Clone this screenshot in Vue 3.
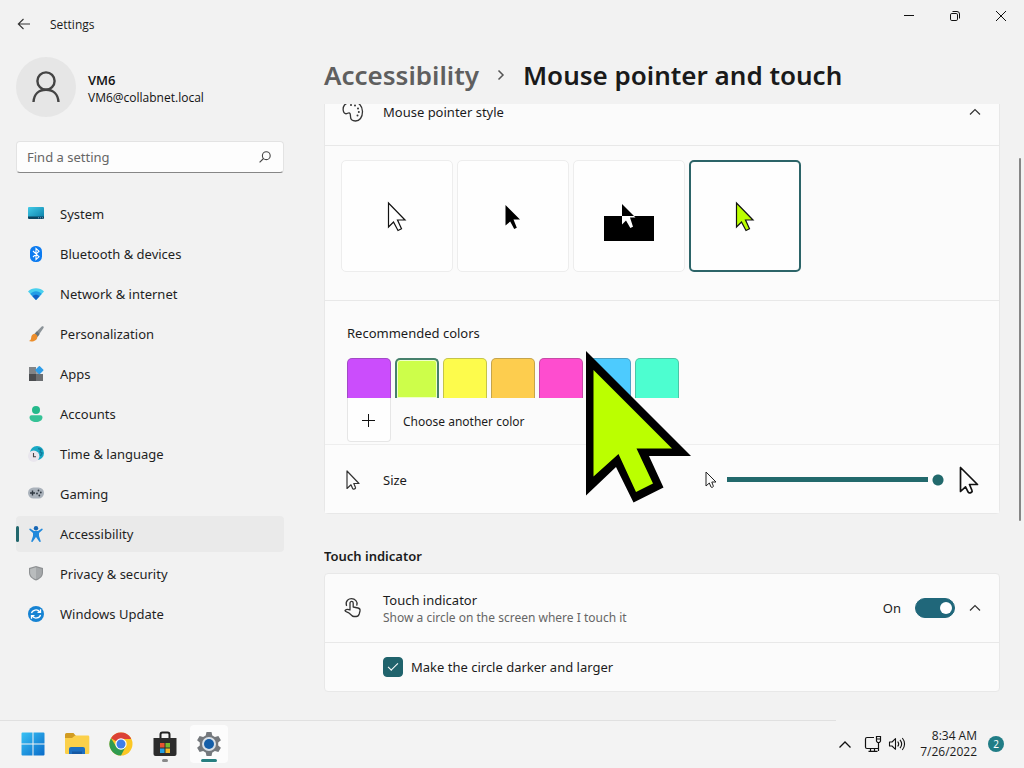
<script setup>
import { ref } from 'vue'

const navItems = [
  { id: 'system', label: 'System' },
  { id: 'bluetooth', label: 'Bluetooth & devices' },
  { id: 'network', label: 'Network & internet' },
  { id: 'personalization', label: 'Personalization' },
  { id: 'apps', label: 'Apps' },
  { id: 'accounts', label: 'Accounts' },
  { id: 'time', label: 'Time & language' },
  { id: 'gaming', label: 'Gaming' },
  { id: 'accessibility', label: 'Accessibility' },
  { id: 'privacy', label: 'Privacy & security' },
  { id: 'update', label: 'Windows Update' },
]
const active = ref('accessibility')

const pointerStyles = ['White', 'Black', 'Inverted', 'Custom']
const pointerStyle = ref('Custom')

const colors = [
  { name: 'Purple', value: '#cb4dfc' },
  { name: 'Lime', value: '#cdfe4a' },
  { name: 'Yellow', value: '#fdfb4c' },
  { name: 'Gold', value: '#fdcd4e' },
  { name: 'Pink', value: '#fe4dcf' },
  { name: 'Turquoise', value: '#4dcbfe' },
  { name: 'Green', value: '#4dfed0' },
]
const color = ref('Lime')
const size = ref(15)
const touch = ref(true)
const darker = ref(true)
const search = ref('')
</script>

<template>
  <div class="desktop">
    <div class="window">
      <header class="titlebar">
        <button class="back" aria-label="Back">
          <svg width="14" height="12" viewBox="0 0 14 12"><path d="M13 6H1.5M6.5 1L1.3 6l5.2 5" fill="none" stroke="#333" stroke-width="1.1" /></svg>
        </button>
        <span class="app-title">Settings</span>
        <div class="controls">
          <button aria-label="Minimize"><svg width="12" height="12" viewBox="0 0 12 12"><path d="M1 5.5h10" stroke="#111" /></svg></button>
          <button aria-label="Restore"><svg width="12" height="12" viewBox="0 0 12 12"><g fill="none" stroke="#111"><rect x="1.5" y="3.5" width="7" height="7" rx="1.3" /><path d="M3.5 1.5H8A2.5 2.5 0 0 1 10.500 4v4.500" /></g></svg></button>
          <button aria-label="Close"><svg width="12" height="12" viewBox="0 0 12 12"><path d="M1 1l10 10M11 1L1 11" stroke="#111" /></svg></button>
        </div>
      </header>

      <div class="body">
        <aside class="sidebar">
          <div class="profile">
            <div class="avatar">
              <svg width="28" height="32" viewBox="0 0 28 32"><g fill="none" stroke="#444" stroke-width="2.4"><circle cx="14" cy="10" r="8.600" /><path d="M1.500 31C2 23 7 18.800 14 18.800S26 23 26.500 31" /></g></svg>
            </div>
            <div class="who">
              <div class="user">VM6</div>
              <div class="mail">VM6@collabnet.local</div>
            </div>
          </div>
          <div class="search">
            <input v-model="search" type="text" aria-label="Find a setting" placeholder="Find a setting" />
            <svg width="12" height="12" viewBox="0 0 12 12"><g fill="none" stroke="#444" stroke-width="1.1"><circle cx="7.300" cy="4.700" r="3.900" /><path d="M4.500 7.500L.6 11.400" /></g></svg>
          </div>
          <nav>
            <a v-for="item in navItems" :key="item.id" href="#" :class="{ on: active === item.id }" @click.prevent="active = item.id">
              <svg v-if="item.id === 'system'" class="ic" viewBox="0 0 16 16">
                <defs><linearGradient id="sy" x2="1" y2="1"><stop stop-color="#42cbe8" /><stop offset="1" stop-color="#0a7fa8" /></linearGradient></defs>
                <path d="M0 2a1 1 0 0 1 1-1h14a1 1 0 0 1 1 1v10H0z" fill="url(#sy)" /><path d="M0 10.500h16V12a1 1 0 0 1-1 1H1a1 1 0 0 1-1-1z" fill="#0b4560" /><path d="M10 11.800h1M12 11.800h1M14 11.800h1" stroke="#9be" stroke-width=".8" />
              </svg>
              <svg v-else-if="item.id === 'bluetooth'" class="ic" viewBox="0 0 16 16">
                <rect x="2" width="12" height="16" rx="5.500" fill="#0c7bf0" /><path d="M5 5l6 5.800L8 13.500v-11L11 5.200 5 11" fill="none" stroke="#fff" stroke-width="1.100" />
              </svg>
              <svg v-else-if="item.id === 'network'" class="ic" viewBox="0 0 16 16">
                <path d="M0 5.500C4 1.200 12 1.200 16 5.500L8 14z" fill="#49d0ee" /><path d="M2.300 7.900C5.500 4.500 10.500 4.500 13.700 7.900L8 14z" fill="#219ce6" /><path d="M4.500 10.200c2-2 5-2 7 0L8 14z" fill="#1260c5" />
              </svg>
              <svg v-else-if="item.id === 'personalization'" class="ic" viewBox="0 0 16 16">
                <path d="M14 .3c1.200-.6 2.200.5 1.500 1.600L10 10 7 7.300z" fill="#8b9398" /><path d="M9 5.300L11.700 8 9.500 11 6.500 8z" fill="#68747a" /><path d="M6.300 7.800c1.800.1 3 1.300 3.100 3.100C9 14.500 5 16.200.8 15c1.900-.6 2.200-1.500 2.400-3.500.2-2 1.300-3.500 3.100-3.700z" fill="#ec8e2c" />
              </svg>
              <svg v-else-if="item.id === 'apps'" class="ic" viewBox="0 0 16 16">
                <path d="M1 1h7v7H1z" fill="#818487" /><path d="M1 8h7v7H1z" fill="#4b4d50" /><path d="M8 8h7v7H8z" fill="#6c6f72" /><path d="M8 3h4v5H8z" fill="#a0a3a6" /><rect x="8.300" y="1" width="6.200" height="6.200" rx=".8" transform="rotate(45 11.400 4.100)" fill="#2e9de9" />
              </svg>
              <svg v-else-if="item.id === 'accounts'" class="ic" viewBox="0 0 16 16">
                <circle cx="8" cy="4" r="4" fill="#24b98b" /><path d="M3.500 9.300h9a2 2 0 0 1 2 2C14.500 14.500 11.500 16 8 16s-6.500-1.500-6.500-4.700a2 2 0 0 1 2-2z" fill="#35c296" />
              </svg>
              <svg v-else-if="item.id === 'time'" class="ic" viewBox="0 0 16 16">
                <circle cx="9" cy="7" r="7" fill="#19a9c5" /><path d="M10 2.500l3 1-1 2.500 2 1-1.500 3" fill="none" stroke="#127d9e" stroke-width="1.500" /><circle cx="5.700" cy="10.300" r="5.700" fill="#e9e6ed" /><path d="M5.500 7v3.800H8" fill="none" stroke="#444" stroke-width="1.100" />
              </svg>
              <svg v-else-if="item.id === 'gaming'" class="ic" viewBox="0 0 16 16">
                <rect y="1.500" width="16" height="11" rx="5.500" fill="#aab2bb" /><path d="M2 7h5M4.500 4.500v5" stroke="#303942" stroke-width="1.400" /><g fill="#303942"><circle cx="10.500" cy="4.500" r=".9" /><circle cx="12.800" cy="6.500" r=".9" /><circle cx="9" cy="7.500" r=".9" /><circle cx="11.300" cy="9.500" r=".9" /></g>
              </svg>
              <svg v-else-if="item.id === 'accessibility'" class="ic" viewBox="0 0 16 16">
                <circle cx="8" cy="2.200" r="2.200" fill="#1766b4" /><path d="M2.500 2.700L6 5h4l3.500-2.300c.8-.4 1.700.6.900 1.300L11 6.900v3l1.700 5.200c.2 1-1.100 1.300-1.500.5L8 11l-3.200 4.600c-.4.800-1.700.5-1.500-.5L5 9.900v-3L1.600 4c-.8-.7.1-1.700.9-1.300z" fill="#2089dc" />
              </svg>
              <svg v-else-if="item.id === 'privacy'" class="ic" viewBox="0 0 16 16">
                <path d="M8 0l7 2v4.500c0 4-3 6.500-7 8-4-1.500-7-4-7-8V2z" fill="#8e9193" /><path d="M8 1.200l5.900 1.700v3.600c0 3.400-2.500 5.500-5.900 6.800z" fill="#a5a8aa" /><path d="M8 1.200v12.100c-3.400-1.300-5.900-3.400-5.900-6.800V2.900z" fill="#b9bcbd" />
              </svg>
              <svg v-else class="ic" viewBox="0 0 16 16">
                <circle cx="8" cy="8" r="8" fill="#1683d3" /><g fill="none" stroke="#fff" stroke-width="1.300"><path d="M3.500 7.200C4.300 3.700 9.500 2.700 11.700 5.800M12.500 3.300v3h-3M12.500 8.800c-.8 3.500-6 4.500-8.200 1.400M3.500 12.700v-3h3" /></g>
              </svg>
              <span>{{ item.label }}</span>
            </a>
          </nav>
        </aside>

        <main>
          <h1>
            <a href="#">Accessibility</a>
            <svg width="8" height="12" viewBox="0 0 8 12"><path d="M1.500 1.500L6 6l-4.500 4.500" fill="none" stroke="#555" stroke-width="1.500" /></svg>
            <span>Mouse pointer and touch</span>
          </h1>

          <div class="viewport">
            <section class="card first">
              <div class="row head">
                <svg class="row-ic" width="22" height="22" viewBox="0 0 22 22"><path d="M2.500 4C4.500 2 7.500 1 11 1c6 0 9.500 4 9.500 9.500 0 6-3 9.500-7 9.500-3.500 0-5-2-5-4.500 0-2.200-.2-3.700-1.500-3.700-1.200 0-2 1.200-3.500.9C1 12.200.2 7 2.500 4z" fill="none" stroke="#333" stroke-width="1.300" /><g fill="#333"><circle cx="9" cy="4" r="1" /><circle cx="13" cy="4.500" r="1" /><circle cx="16" cy="7.500" r="1" /><circle cx="16.800" cy="11" r="1" /><circle cx="15.500" cy="14.500" r="1" /></g></svg>
                <span class="grow">Mouse pointer style</span>
                <button class="chev" aria-label="Collapse mouse pointer style"><svg width="12" height="8" viewBox="0 0 12 8"><path d="M1 6.500l5-5 5 5" fill="none" stroke="#333" stroke-width="1.200" /></svg></button>
              </div>

              <div class="tiles">
                <button v-for="name in pointerStyles" :key="name" class="tile" :class="{ on: pointerStyle === name }" :aria-label="name" @click="pointerStyle = name">
                  <svg v-if="name === 'White'" width="50" height="50" viewBox="0 0 50 50"><path d="M16.500 12v24l5-5 4.500 8.500 3.500-1.700-4-8.800H33z" fill="#fff" stroke="#111" stroke-width="1.200" /></svg>
                  <svg v-else-if="name === 'Black'" width="50" height="50" viewBox="0 0 50 50"><path d="M17.500 14v20.500l4.700-4 4 7.500 2.600-1.300L25.500 28.500H32z" fill="#000" /></svg>
                  <svg v-else-if="name === 'Inverted'" width="50" height="50" viewBox="0 0 50 50"><path d="M0 25h50v25H0z" fill="#000" /><path d="M18 13v12h12z" fill="#000" /><path d="M18 25h12l1.500 1.500H26l3 9.300-2.700 1.200-4.300-7.500-4 4z" fill="#fff" /></svg>
                  <svg v-else width="50" height="50" viewBox="0 0 50 50"><path d="M16.500 12v24l5-5 4.500 8.500 3.500-1.700-4-8.800H33z" fill="#bf0" stroke="#111" stroke-width="1.200" /></svg>
                </button>
              </div>

              <div class="colors">
                <h2>Recommended colors</h2>
                <div class="swatches">
                  <button v-for="c in colors" :key="c.name" class="swatch" :class="{ on: color === c.name }" :aria-label="c.name" :style="{ backgroundColor: c.value }" @click="color = c.name"></button>
                </div>
                <div class="another">
                  <button id="add" aria-label="Choose another color"><svg width="14" height="14" viewBox="0 0 14 14"><path d="M0 7.500h13M6.500 1v13" stroke="#111" /></svg></button>
                  <label for="add">Choose another color</label>
                </div>
              </div>

              <div class="row size">
                <svg class="row-ic" width="22" height="22" viewBox="0 0 22 22"><path d="M5 2v17.500l4-3.700 1.700 3.900c.5 1 3.300-.1 2.800-1.200L11.800 14.500H17z" fill="none" stroke="#333" stroke-width="1.200" stroke-linejoin="round" /></svg>
                <label class="grow" for="size">Size</label>
                <svg class="small" width="12" height="18" viewBox="0 0 12 18"><path d="M1 1v14l3.300-3 1.700 4c.7 1 2.700 0 2.300-1L6.800 11H11z" fill="none" stroke="#222" stroke-linejoin="round" /></svg>
                <input id="size" v-model="size" type="range" min="1" max="15" />
                <svg class="large" width="20" height="28" viewBox="0 0 20 28"><path d="M1.500 1.500v24l5-4.700 2.800 5.500c1 1.500 4.500 0 3.700-1.800L10.500 18.500h8z" fill="none" stroke="#111" stroke-width="1.700" stroke-linejoin="round" /></svg>
              </div>
            </section>

            <h3>Touch indicator</h3>
            <section class="card">
              <div class="row">
                <svg class="row-ic" width="22" height="22" viewBox="0 0 22 22"><g fill="none" stroke="#333" stroke-width="1.300" stroke-linejoin="round" stroke-linecap="round"><path d="M4.500 8.500C3 3.500 7 1.700 9.500 1.700c3.500 0 6.500 2.800 5.300 6.500" /><path d="M8 12.500V6a1.600 1.600 0 0 1 3.200 0v4l4.800 1c1.500.4 2.300 1.500 2 3l-.8 3c-.5 1.700-1.500 2.500-3 2.500H12c-1 0-1.500-.2-2.200-1L7 16c-1.500-1-4-1-4-2.500 1.300-1.300 3.500-1.300 5-.5" /></g></svg>
                <div class="grow">
                  <label for="touch">Touch indicator</label>
                  <p>Show a circle on the screen where I touch it</p>
                </div>
                <span class="state">{{ touch ? 'On' : 'Off' }}</span>
                <input id="touch" v-model="touch" class="toggle" type="checkbox" role="switch" />
                <button class="chev" aria-label="Collapse touch indicator"><svg width="12" height="8" viewBox="0 0 12 8"><path d="M1 6.500l5-5 5 5" fill="none" stroke="#333" stroke-width="1.200" /></svg></button>
              </div>
              <div class="sub">
                <input id="darker" v-model="darker" class="check" type="checkbox" />
                <label for="darker">Make the circle darker and larger</label>
              </div>
            </section>
          </div>
        </main>
      </div>
      <div class="scrollbar"></div>
    </div>

    <footer class="taskbar">
      <div class="pinned">
        <button aria-label="Start"><svg width="24" height="24" viewBox="0 0 24 24"><defs><linearGradient id="st" gradientUnits="userSpaceOnUse" x1="0" y1="0" x2="24" y2="24"><stop stop-color="#3ac4f6" /><stop offset="1" stop-color="#0869c8" /></linearGradient></defs><path d="M.5 1.500a1 1 0 0 1 1-1h10v11H.5zM12.500.5h10a1 1 0 0 1 1 1v10h-11zM.5 12.500h11v11h-10a1 1 0 0 1-1-1zM12.500 12.500h11v10a1 1 0 0 1-1 1h-10z" fill="url(#st)" /></svg></button>
        <button aria-label="File Explorer"><svg width="26" height="24" viewBox="0 0 26 24"><path d="M1 2.500A1.500 1.500 0 0 1 2.500 1h7L12 4 9 7H1z" fill="#d19b22" /><path d="M1 6h7l3-2.500h13a1.300 1.300 0 0 1 1.300 1.300v15.900A1.300 1.300 0 0 1 24 22H2.300A1.300 1.300 0 0 1 1 20.700z" fill="#fbd04a" /><path d="M5 22v-5a2 2 0 0 1 2-2h12a2 2 0 0 1 2 2v5z" fill="#1c6fc1" /><path d="M8 22v-2.500h10V22z" fill="#1558a2" /></svg></button>
        <button aria-label="Chrome"><svg width="24" height="24" viewBox="0 0 24 24"><circle cx="12" cy="12" r="11.500" fill="#fbc724" /><path d="M12 12L2 6.200A11.500 11.500 0 0 1 22 6.200L21.800 7H12z" fill="#db4136" /><path d="M2 6.200A11.500 11.500 0 0 0 12 23.500l4.500-8.500L12 12 7.500 15z" fill="#2f9b50" /><circle cx="12" cy="12" r="5.700" fill="#fff" /><circle cx="12" cy="12" r="4.500" fill="#3e7eea" /></svg></button>
        <button class="running" aria-label="Microsoft Store"><svg width="24" height="26" viewBox="0 0 24 26"><path d="M7.500 8V3.500a2 2 0 0 1 2-2h5a2 2 0 0 1 2 2V8" fill="none" stroke="#222" stroke-width="2" /><path d="M.5 7h23v16a2 2 0 0 1-2 2h-19a2 2 0 0 1-2-2z" fill="#2c2c2c" /><path d="M7 12h4.500v4.500H7z" fill="#e65330" /><path d="M12.500 12H17v4.500h-4.500z" fill="#79b82f" /><path d="M7 17.500h4.500V22H7z" fill="#219fe3" /><path d="M12.500 17.500H17V22h-4.500z" fill="#f4b727" /></svg></button>
        <button class="current" aria-label="Settings"><svg width="26" height="26" viewBox="0 0 26 26"><path d="M10.500 1h5l.8 3.500 2.600 1.500 3.500-1.100 2.500 4.400-2.700 2.300v2.800l2.700 2.300-2.500 4.400-3.500-1.100-2.600 1.500-.8 3.500h-5l-.8-3.500L7.100 20l-3.500 1.100-2.500-4.400 2.700-2.300v-2.800L1.100 9.300l2.500-4.400L7.100 6l2.600-1.500z" fill="#74787c" /><circle cx="13" cy="13" r="7" fill="#d8e0e7" /><circle cx="13" cy="13" r="5" fill="#145ea8" /></svg></button>
      </div>
      <div class="tray">
        <button aria-label="Show hidden icons"><svg width="14" height="9" viewBox="0 0 14 9"><path d="M1.500 7.500L7 2l5.500 5.500" fill="none" stroke="#111" stroke-width="1.300" /></svg></button>
        <button aria-label="Network"><svg width="18" height="18" viewBox="0 0 18 18"><g fill="none" stroke="#111" stroke-width="1.200"><path d="M10 2.500H3A1.500 1.500 0 0 0 1.500 4v8A1.500 1.500 0 0 0 3 13.500h11.500M6.500 13.500V16M10.500 13.500V16M4.500 16.400h9" /><path d="M12.500 1.500h4V6l-1 1.500h-2l-1-1.500zM14.500 7.500V16M12.500 4h4" /></g></svg></button>
        <button aria-label="Volume"><svg width="18" height="16" viewBox="0 0 18 16"><g fill="none" stroke="#111" stroke-width="1.100"><path d="M1.500 6H4l3.500-3.300v10.600L4 10H1.500z" stroke-linejoin="round" /><path d="M9.700 5.500c1.200 1.500 1.200 3.500 0 5M12 3.800c2 2.500 2 5.900 0 8.400M14.300 2c3 3.500 3 8.500 0 12" /></g></svg></button>
        <button class="clock"><span>8:34 AM</span><span>7/26/2022</span></button>
        <button class="badge" aria-label="2 notifications">2</button>
      </div>
    </footer>

    <svg class="pointer" width="106" height="152" viewBox="0 0 106 152"><path d="M0 0v144.500L30 116l17.500 35.500 30-15L63 105h42z" fill="#000" /><path d="M7.500 19v106.500L32.500 103l17.500 38 17-8.500L50.500 97.500H86z" fill="#bf0" /></svg>
  </div>
</template>

<style>
body { background: #f2f2f2; }
</style>

<style scoped>
.desktop { position: relative; display: flex; flex-direction: column; min-height: 100vh; overflow: hidden; background: #f2f2f2; color: #1b1b1b; font: 13px/20px "Noto Sans", "Open Sans", sans-serif; }
.desktop *, .desktop *::before { box-sizing: border-box; }
button { display: flex; align-items: center; justify-content: center; padding: 0; border: 0; background: none; color: inherit; font: inherit; }
svg { flex: none; }
input { margin: 0; font: inherit; }
.window { position: relative; flex: 1; display: flex; flex-direction: column; }

.titlebar { display: flex; align-items: center; height: 48px; padding-left: 8px; }
.back { width: 32px; height: 32px; }
.app-title { margin-left: 10px; padding-top: 2px; font-family: "Open Sans", "Noto Sans", sans-serif; font-size: 12px; line-height: 18px; }
.controls { display: flex; align-self: flex-start; margin-left: auto; }
.controls button { width: 46px; height: 32px; }

.body { flex: 1; display: grid; grid-template-columns: 284px minmax(0, 1fr); }
.sidebar { padding: 9px 0 0 16px; }
.profile { display: flex; align-items: center; gap: 12px; height: 60px; font-family: "Open Sans", "Noto Sans", sans-serif; font-size: 12px; line-height: 18px; color: #111; }
.avatar { display: grid; place-items: center; width: 60px; height: 60px; border-radius: 50%; background: #e6e6e6; }
.who { padding-top: 4px; }
.user { font-size: 13px; font-weight: 600; }
.search { display: flex; align-items: center; height: 32px; margin: 24px 0 23px; padding: 0 12px 0 10px; border: 1px solid #e3e3e3; border-bottom-color: #868686; border-radius: 4px; background: #fdfdfd; }
.search input { flex: 1; min-width: 0; padding: 0; border: 0; outline: 0; background: none; }
.search input::placeholder { color: #666; opacity: 1; }
nav { display: flex; flex-direction: column; gap: 4px; }
nav a { position: relative; display: flex; align-items: center; gap: 16px; height: 36px; padding-left: 12px; border-radius: 4px; color: #1f1f1f; text-decoration: none; }
nav a.on { background: #eaeaea; }
nav a.on::before { content: ""; position: absolute; left: 0; top: 10px; width: 3px; height: 16px; border-radius: 2px; background: #22676d; }
.ic { width: 16px; height: 16px; }

main { display: flex; flex-direction: column; padding: 8px 24px 26px 40px; }
h1 { display: flex; align-items: center; gap: 18px; height: 38px; margin: 0 0 10px; font-size: 26px; line-height: 38px; font-weight: 600; color: #1a1a1a; white-space: nowrap; }
h1 a { color: #5f5f5f; text-decoration: none; }
.viewport { flex: 1; overflow: hidden; }
.card { border: 1px solid #e8e8e8; border-radius: 4px; background: #fbfbfb; }
.first { margin-top: -27px; }
.row { display: flex; align-items: center; min-height: 68px; padding: 0 17px; }
.row-ic { margin-right: 19px; }
.grow { flex: 1; }
.head { line-height: 14px; }
.head, .tiles { border-bottom: 1px solid #e8e8e8; }
.chev { width: 14px; height: 14px; }
.tiles { display: flex; gap: 4px; padding: 14px 16px 28px; }
.tile { width: 112px; height: 112px; border: 1px solid #ededed; border-radius: 5px; background: #fefefe; }
.tile.on { border: 2px solid #2c6468; }
.colors { padding: 22px 22px 2px; border-bottom: 1px solid #eee; }
h2, h3 { margin: 0; font-size: 13px; line-height: 20px; font-weight: 400; }
.swatches { display: flex; gap: 4px; margin-top: 15px; }
.swatch { width: 44px; height: 40px; border: 1px solid rgba(70, 70, 70, .3); border-bottom: 0; border-radius: 5px 5px 0 0; }
.swatch.on { border: 2px solid #46806c; border-bottom: 0; box-shadow: inset 0 0 0 1px #efffca; }
.another { display: flex; align-items: center; gap: 12px; font-size: 12px; }
.another label { padding-top: 4px; }
.another button { width: 44px; height: 44px; border: 1px solid #e6e6e6; border-top: 0; border-radius: 0 0 4px 4px; background: #fefefe; }
.size { padding-top: 2px; background: #fcfcfc; }
.small { margin-right: 10px; }
.large { margin: 0 3px 0 11px; }
#size { width: 221px; height: 20px; appearance: none; background: linear-gradient(#22696c, #22696c) 0 7px / 201px 5px no-repeat; }
#size::-webkit-slider-thumb { appearance: none; width: 20px; height: 20px; border-radius: 50%; background: radial-gradient(circle, #22696c 5px, #fdfdfd 6px); }
h3 { margin: 32px 0 7px; font-weight: 600; }
p { margin: 0; font-size: 12px; line-height: 16px; color: #666; }
.state { margin-right: 14px; }
.toggle { position: relative; width: 40px; height: 20px; margin-right: 13px; appearance: none; border: 1px solid #777; border-radius: 10px; }
.toggle::before { content: ""; position: absolute; left: 3px; top: 3px; width: 12px; height: 12px; border-radius: 50%; background: #777; }
.toggle:checked { border-color: #20677a; background: #20677a; }
.toggle:checked::before { left: 24px; background: #fff; }
.sub { display: flex; align-items: center; gap: 8px; height: 49px; padding-left: 58px; border-top: 1px solid #e8e8e8; }
.check { display: grid; place-items: center; width: 20px; height: 20px; appearance: none; border: 1px solid #777; border-radius: 4px; }
.check:checked { border-color: #20636c; background: #20636c; }
.check:checked::before { content: ""; width: 10px; height: 5px; margin-bottom: 3px; border: solid #fff; border-width: 0 0 1px 1px; transform: rotate(-45deg); }
.scrollbar { position: absolute; right: 3px; top: 158px; width: 2px; height: 363px; border-radius: 1px; background: #868686; }

.taskbar { position: relative; display: flex; justify-content: space-between; height: 48px; padding: 0 20px 0 14px; background: #f3f3f3; }
.taskbar::before { content: ""; position: absolute; left: 0; top: 0; right: 188px; height: 1px; background: #e0e0e0; }
.pinned { display: flex; align-items: center; gap: 6px; }
.pinned button { position: relative; width: 38px; height: 38px; border-radius: 4px; }
.pinned .current { background: #fcfcfc; }
.running::after, .current::after { content: ""; position: absolute; bottom: 1px; width: 6px; height: 3px; border-radius: 2px; background: #888; }
.current::after { width: 16px; background: #267f80; }
.tray { display: flex; align-items: center; }
.tray button:first-child { margin-right: 12px; }
.tray button:nth-child(2) { margin-right: 6px; }
.tray .clock { flex-direction: column; align-items: flex-end; margin: 0 11px 0 14px; font-family: "Open Sans", "Noto Sans", sans-serif; font-size: 12px; line-height: 16px; }
.tray .badge { width: 16px; height: 16px; border-radius: 50%; background: #217d86; color: #fff; font-size: 10px; }
.pointer { position: absolute; left: 586px; top: 351px; pointer-events: none; }
</style>
